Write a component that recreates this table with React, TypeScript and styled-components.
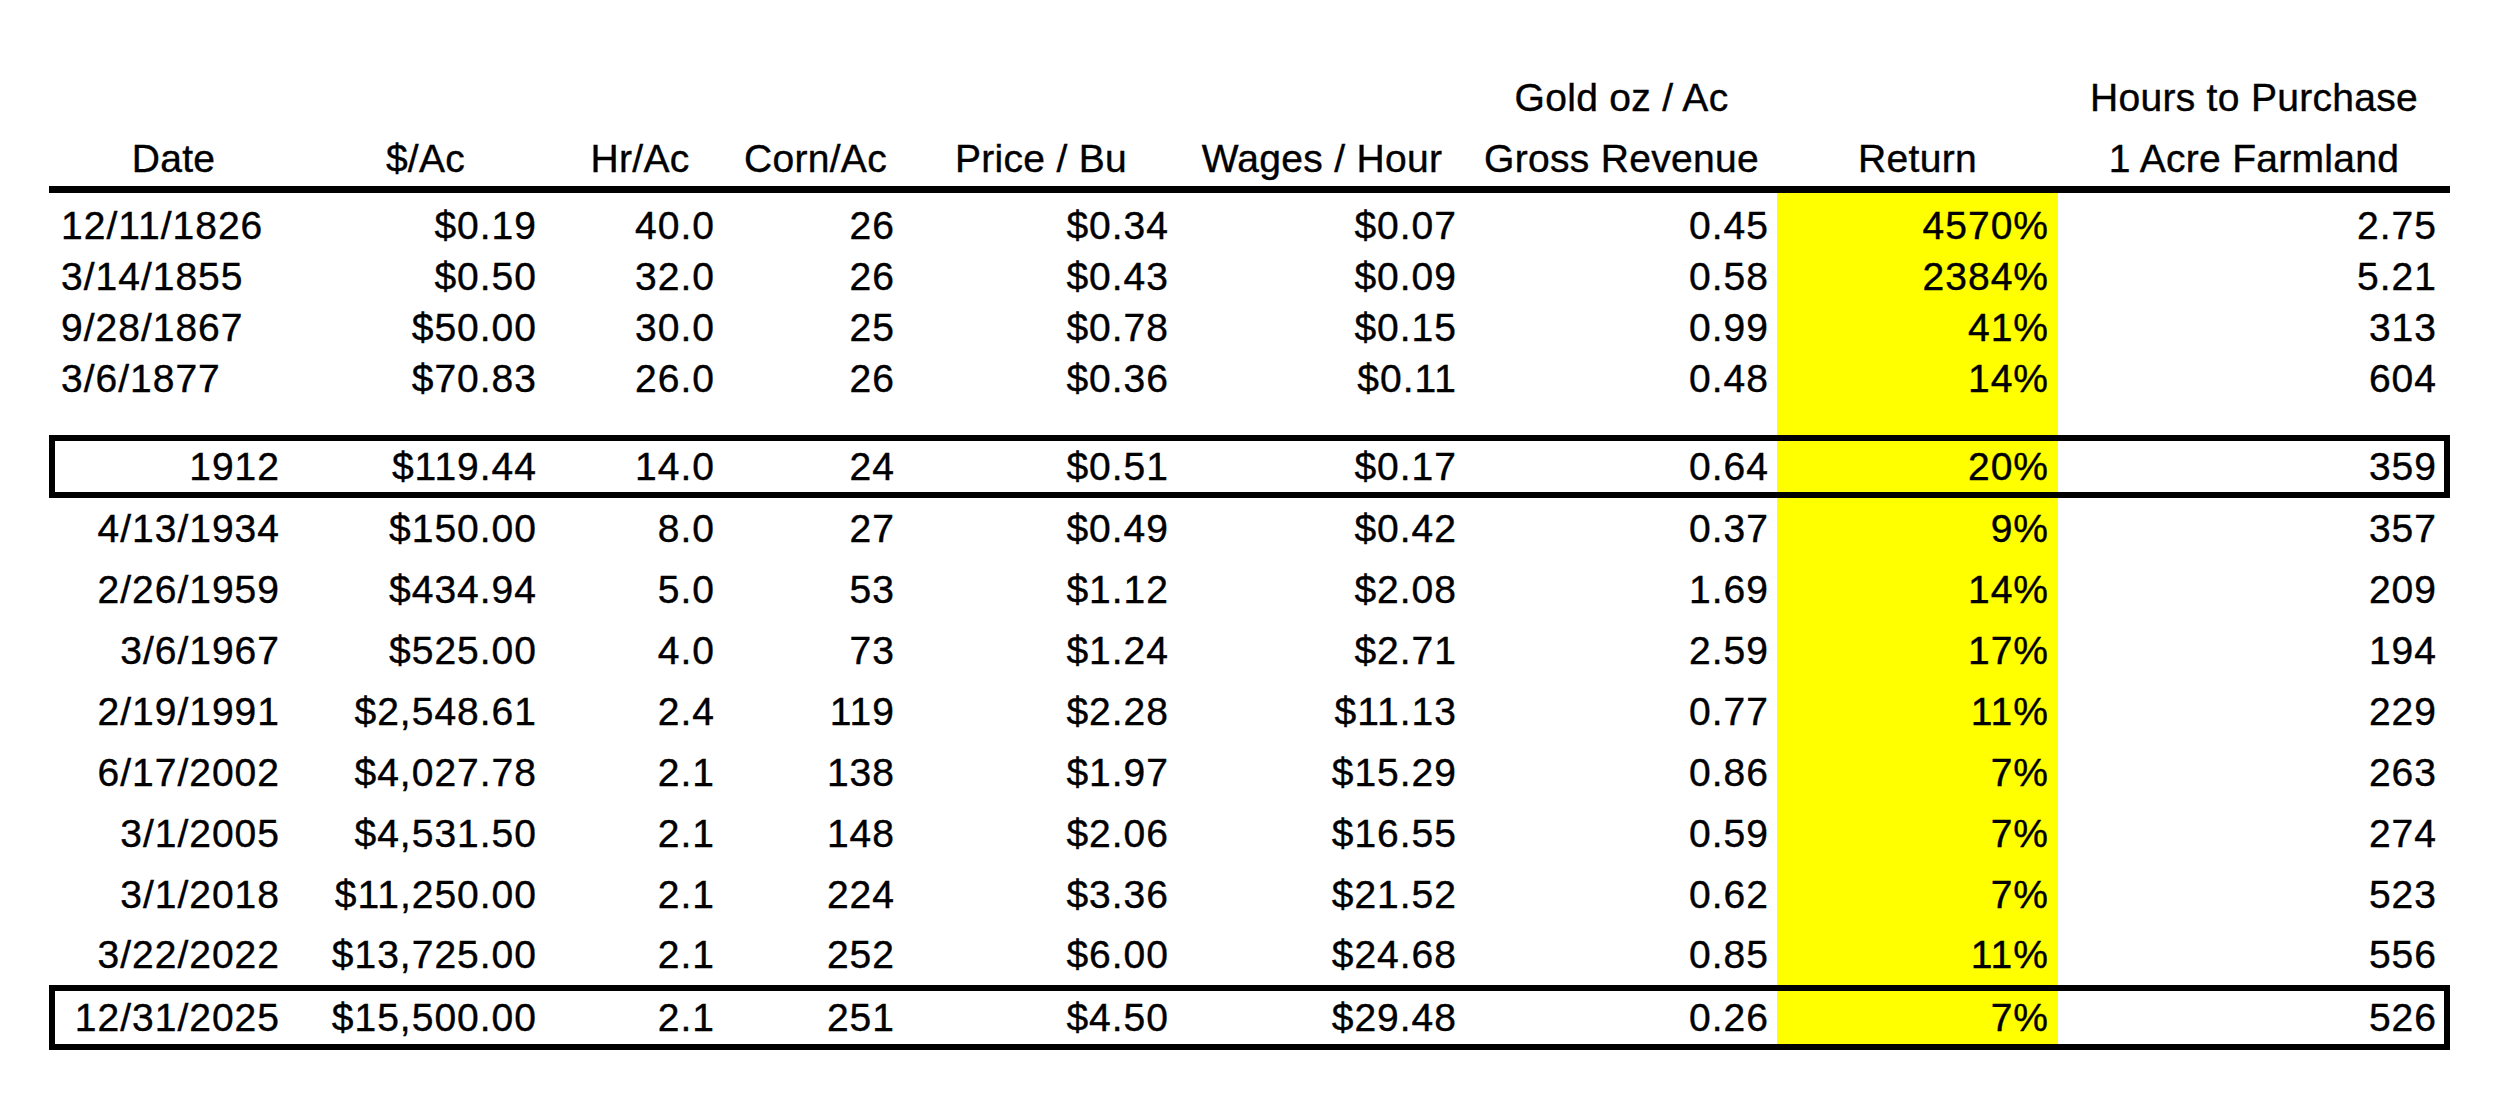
import React from "react";
import styled, { createGlobalStyle, css } from "styled-components";

const GlobalStyle = createGlobalStyle`
  html, body { margin: 0; padding: 0; background: #ffffff; }
  body {
    font-family: "Liberation Sans", Arial, sans-serif;
    color: #000000;
    -webkit-text-stroke: 0.4px #000000;
  }
`;

const COLS = "249px 255px 174px 177px 274px 288px 311px 281px 392px";
const PAD_RIGHT = [18, 16, 12, 9, 9, 9, 8, 9, 13];

const Page = styled.div`
  width: 2500px;
  height: 1120px;
  box-sizing: border-box;
  padding-left: 49px;
  background: #ffffff;
`;

const Sheet = styled.div`
  width: 2401px;
  display: flex;
  flex-direction: column;
`;

const HeaderRow = styled.div`
  display: grid;
  grid-template-columns: ${COLS};
  height: 193px;
  box-sizing: border-box;
  border-bottom: 7px solid #000000;
`;

const HeaderCell = styled.div`
  display: flex;
  flex-direction: column;
  justify-content: flex-end;
  align-items: center;
`;

const HeaderText = styled.div`
  margin-bottom: -3px;
  text-align: center;
  font-size: 39px;
  line-height: 61px;
  letter-spacing: 0.3px;
  white-space: nowrap;
`;

const Row = styled.div<{ $h: number; $boxed?: boolean }>`
  display: grid;
  grid-template-columns: ${COLS};
  height: ${(p) => p.$h}px;
  position: relative;
  ${(p) =>
    p.$boxed &&
    css`
      &::after {
        content: "";
        position: absolute;
        inset: 0;
        border: 6px solid #000000;
        pointer-events: none;
      }
    `}
`;

const Cell = styled.div<{ $left?: boolean; $pr: number; $hl?: boolean }>`
  display: flex;
  align-items: center;
  justify-content: ${(p) => (p.$left ? "flex-start" : "flex-end")};
  padding: ${(p) => (p.$left ? "0 0 0 12px" : `0 ${p.$pr}px 0 0`)};
  background: ${(p) => (p.$hl ? "#ffff00" : "transparent")};
  font-size: 39px;
  letter-spacing: 1px;
  white-space: nowrap;
  overflow: visible;
`;

type Line = {
  values: string[];
  h: number;
  leftDate?: boolean;
  boxed?: boolean;
};

const headers: string[][] = [
  ["Date"],
  ["$/Ac"],
  ["Hr/Ac"],
  ["Corn/Ac"],
  ["Price / Bu"],
  ["Wages / Hour"],
  ["Gold oz / Ac", "Gross Revenue"],
  ["Return"],
  ["Hours to Purchase", "1 Acre Farmland"],
];

const lines: (Line | { spacer: number })[] = [
  { spacer: 7 },
  { values: ["12/11/1826", "$0.19", "40.0", "26", "$0.34", "$0.07", "0.45", "4570%", "2.75"], h: 51, leftDate: true },
  { values: ["3/14/1855", "$0.50", "32.0", "26", "$0.43", "$0.09", "0.58", "2384%", "5.21"], h: 51, leftDate: true },
  { values: ["9/28/1867", "$50.00", "30.0", "25", "$0.78", "$0.15", "0.99", "41%", "313"], h: 51, leftDate: true },
  { values: ["3/6/1877", "$70.83", "26.0", "26", "$0.36", "$0.11", "0.48", "14%", "604"], h: 51, leftDate: true },
  { spacer: 31 },
  { values: ["1912", "$119.44", "14.0", "24", "$0.51", "$0.17", "0.64", "20%", "359"], h: 63, boxed: true },
  { values: ["4/13/1934", "$150.00", "8.0", "27", "$0.49", "$0.42", "0.37", "9%", "357"], h: 61 },
  { values: ["2/26/1959", "$434.94", "5.0", "53", "$1.12", "$2.08", "1.69", "14%", "209"], h: 61 },
  { values: ["3/6/1967", "$525.00", "4.0", "73", "$1.24", "$2.71", "2.59", "17%", "194"], h: 61 },
  { values: ["2/19/1991", "$2,548.61", "2.4", "119", "$2.28", "$11.13", "0.77", "11%", "229"], h: 61 },
  { values: ["6/17/2002", "$4,027.78", "2.1", "138", "$1.97", "$15.29", "0.86", "7%", "263"], h: 61 },
  { values: ["3/1/2005", "$4,531.50", "2.1", "148", "$2.06", "$16.55", "0.59", "7%", "274"], h: 61 },
  { values: ["3/1/2018", "$11,250.00", "2.1", "224", "$3.36", "$21.52", "0.62", "7%", "523"], h: 61 },
  { values: ["3/22/2022", "$13,725.00", "2.1", "252", "$6.00", "$24.68", "0.85", "11%", "556"], h: 60 },
  { values: ["12/31/2025", "$15,500.00", "2.1", "251", "$4.50", "$29.48", "0.26", "7%", "526"], h: 65, boxed: true },
];

const RETURN_COL = 7;

export default function App() {
  return (
    <>
      <GlobalStyle />
      <Page>
        <Sheet>
          <HeaderRow>
            {headers.map((h, i) => (
              <HeaderCell key={i}>
                <HeaderText>
                  {h.map((t, j) => (
                    <div key={j}>{t}</div>
                  ))}
                </HeaderText>
              </HeaderCell>
            ))}
          </HeaderRow>
          {lines.map((ln, i) => {
            if ("spacer" in ln) {
              return (
                <Row key={i} $h={ln.spacer}>
                  {headers.map((_, c) => (
                    <Cell key={c} $pr={0} $hl={c === RETURN_COL} />
                  ))}
                </Row>
              );
            }
            return (
              <Row key={i} $h={ln.h} $boxed={ln.boxed}>
                {ln.values.map((v, c) => (
                  <Cell
                    key={c}
                    $left={c === 0 && ln.leftDate}
                    $pr={PAD_RIGHT[c]}
                    $hl={c === RETURN_COL}
                  >
                    {v}
                  </Cell>
                ))}
              </Row>
            );
          })}
        </Sheet>
      </Page>
    </>
  );
}
